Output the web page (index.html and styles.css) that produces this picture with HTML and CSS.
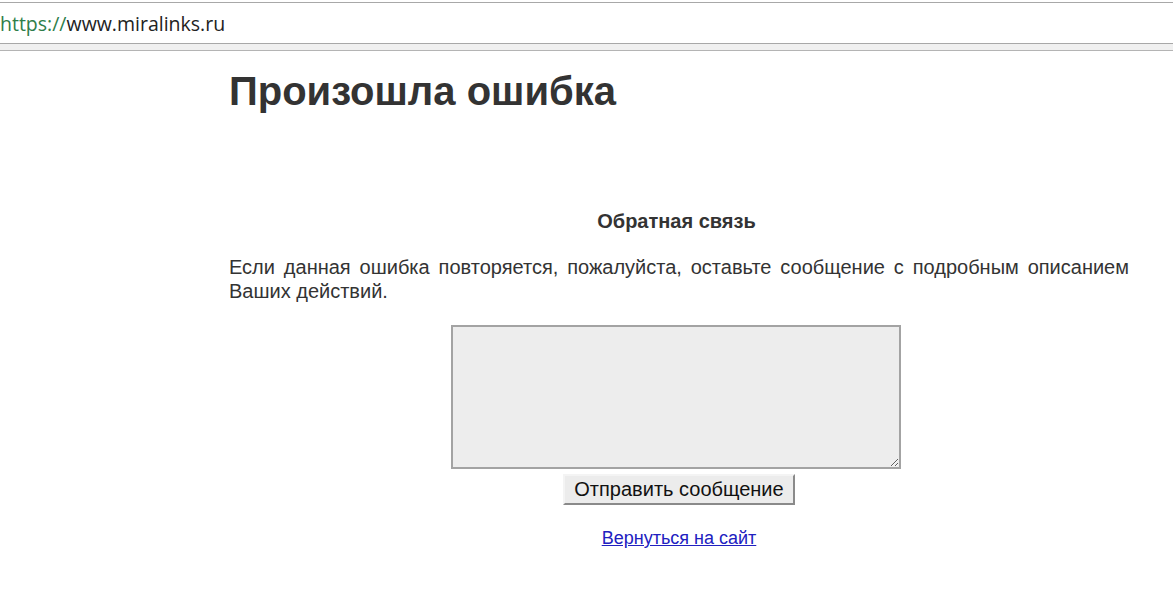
FILE: index.html
```html
<!DOCTYPE html>
<html lang="ru">
<head>
<meta charset="utf-8">
<title>Произошла ошибка</title>
<link rel="stylesheet" href="styles.css">
</head>
<body>
<div class="urlbar"><span class="scheme">https://</span>www.miralinks.ru</div>
<div class="band"></div>
<main class="page">
  <h1 class="title">Произошла ошибка</h1>
  <h2 class="subtitle">Обратная связь</h2>
  <p class="text">Если данная ошибка повторяется, пожалуйста, оставьте сообщение с подробным описанием Ваших действий.</p>
  <form class="form">
    <textarea class="message"></textarea>
    <button type="button" class="send">Отправить сообщение</button>
  </form>
  <a class="back" href="#">Вернуться на сайт</a>
</main>
</body>
</html>
```
FILE: styles.css
```css
html, body {
  margin: 0;
  padding: 0;
  background: #fff;
}
body {
  font-family: "Liberation Sans", Arial, sans-serif;
  color: #333;
}
.urlbar {
  margin-top: 2px;
  height: 40px;
  border-top: 1px solid #a8a8a8;
  border-bottom: 1px solid #a8a8a8;
  display: flex;
  align-items: center;
  font-family: "Open Sans", "Noto Sans", sans-serif;
  font-size: 19.5px;
  color: #222;
}
.scheme { color: #2e7d4a; }
.band {
  height: 6px;
  background: #f0f0f0;
  border-bottom: 1px solid #b4b4b4;
}
.page {
  width: 900px;
  margin-left: 229px;
  display: flex;
  flex-direction: column;
}
.title {
  margin: 17px 0 0;
  font-size: 40px;
  font-weight: bold;
  line-height: 46px;
}
.subtitle {
  margin: 95px 0 0;
  font-size: 20px;
  line-height: 24px;
  text-align: center;
  padding-right: 5px;
}
.text {
  margin: 22px 0 0;
  font-size: 20px;
  line-height: 24px;
  text-align: justify;
}
.form {
  margin-top: 22px;
  display: flex;
  flex-direction: column;
  align-items: center;
  gap: 5px;
}
.message {
  box-sizing: border-box;
  width: 450px;
  height: 144px;
  border: 2px solid #a3a3a3;
  background: #ededed;
  resize: both;
  margin: 0 6px 0 0;
}
.send {
  font-family: "Liberation Sans", Arial, sans-serif;
  font-size: 20px;
  color: #111;
  background: #ececec;
  border: 2px solid;
  border-color: #f4f4f4 #8a8a8a #8a8a8a #f4f4f4;
  padding: 1px 9px;
  height: 31px;
  line-height: 25px;
}
.back {
  align-self: center;
  margin-top: 23px;
  font-size: 18px;
  color: #2020c0;
}
```
